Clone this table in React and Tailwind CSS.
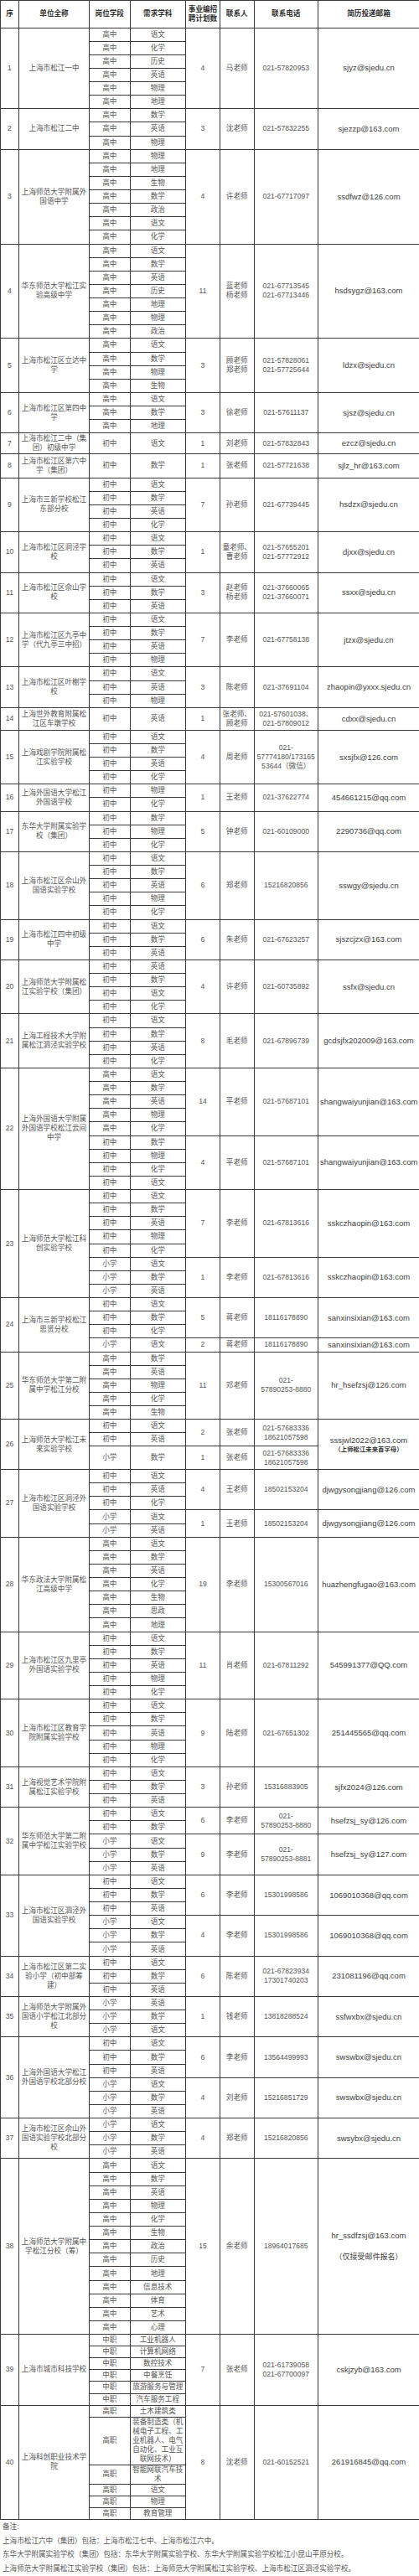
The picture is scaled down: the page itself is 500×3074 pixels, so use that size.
import React from 'react';

const D = 'h-[16.13px]';

const U = [
  { n: 1, name: '上海市松江一中', b: [{ s: '高中', j: ['语文', '化学', '历史', '英语', '物理', '地理'], c: '4', p: ['马老师'], t: ['021-57820953'], e: 'sjyz@sjedu.cn' }] },
  { n: 2, name: '上海市松江二中', b: [{ s: '高中', j: ['数学', '英语', '物理'], c: '3', p: ['沈老师'], t: ['021-57832255'], e: 'sjezzp@163.com' }] },
  { n: 3, name: '上海师范大学附属外国语中学', b: [{ s: '高中', j: ['物理', '地理', '生物', '数学', '政治', '语文', '化学'], c: '4', p: ['许老师'], t: ['021-67717097'], e: 'ssdfwz@126.com' }] },
  { n: 4, name: '华东师范大学松江实验高级中学', b: [{ s: '高中', j: ['语文', '数学', '英语', '历史', '地理', '物理', '政治'], c: '11', p: ['蓝老师', '杨老师'], t: ['021-67713545', '021-67713446'], e: 'hsdsygz@163.com' }] },
  { n: 5, name: '上海市松江区立达中学', b: [{ s: '高中', j: ['语文', '数学', '物理', '生物'], c: '3', p: ['顾老师', '郑老师'], t: ['021-57828061', '021-57725644'], e: 'ldzx@sjedu.cn' }] },
  { n: 6, name: '上海市松江区第四中学', b: [{ s: '高中', j: ['语文', '数学', '地理'], c: '3', p: ['徐老师'], t: ['021-57611137'], e: 'sjsz@sjedu.cn' }] },
  { n: 7, name: '上海市松江二中（集团）初级中学', b: [{ s: '初中', j: [['语文', 'h-[24.7px]']], c: '1', p: ['刘老师'], t: ['021-57832843'], e: 'ezcz@sjedu.cn' }] },
  { n: 8, name: '上海市松江区第六中学（集团）', b: [{ s: '初中', j: [['数学', 'h-[28.7px]']], c: '1', p: ['张老师'], t: ['021-57721638'], e: 'sjlz_hr@163.com' }] },
  { n: 9, name: '上海市三新学校松江东部分校', b: [{ s: '初中', j: ['语文', '数学', '英语', '化学'], c: '7', p: ['孙老师'], t: ['021-67739445'], e: 'hsdzx@sjedu.cn' }] },
  { n: 10, name: '上海市松江区洞泾学校', b: [{ s: '初中', j: ['语文', '数学', '英语'], c: '1', p: ['童老师、', '曹老师'], t: ['021-57655201', '021-57772912'], e: 'djxx@sjedu.cn' }] },
  { n: 11, name: '上海市松江区佘山学校', b: [{ s: '初中', j: ['语文', '数学', '英语'], c: '3', p: ['赵老师', '杨老师'], t: ['021-37660065', '021-37660071'], e: 'ssxx@sjedu.cn' }] },
  { n: 12, name: '上海市松江区九亭中学（代九亭三中招）', b: [{ s: '初中', j: ['语文', '数学', '英语', '物理'], c: '7', p: ['李老师'], t: ['021-67758138'], e: 'jtzx@sjedu.cn' }] },
  { n: 13, name: '上海市松江区叶榭学校', b: [{ s: '初中', j: ['语文', '英语', '物理'], c: '3', p: ['陈老师'], t: ['021-37691104'], e: 'zhaopin@yxxx.sjedu.cn' }] },
  { n: 14, name: '上海世外教育附属松江区车墩学校', b: [{ s: '初中', j: [['英语', 'h-[27px]']], c: '1', p: ['张老师、', '顾老师'], t: ['021-57601038、', '021-57809012'], e: 'cdxx@sjedu.cn' }] },
  { n: 15, name: '上海戏剧学院附属松江实验学校', b: [{ s: '初中', j: ['语文', '数学', '英语', '化学'], c: '4', p: ['周老师'], t: ['021-', '57774180/173165', '53644（微信）'], e: 'sxsjfx@126.com' }] },
  { n: 16, name: '上海外国语大学松江外国语学校', b: [{ s: '初中', j: ['物理', '化学'], c: '1', p: ['王老师'], t: ['021-37622774'], e: '454661215@qq.com' }] },
  { n: 17, name: '东华大学附属实验学校（集团）', b: [{ s: '初中', j: ['数学', '物理', '化学'], c: '5', p: ['钟老师'], t: ['021-60109000'], e: '2290736@qq.com' }] },
  { n: 18, name: '上海市松江区佘山外国语实验学校', b: [{ s: '初中', j: ['语文', '数学', '英语', '物理', '化学'], c: '6', p: ['郑老师'], t: ['15216820856'], e: 'sswgy@sjedu.cn' }] },
  { n: 19, name: '上海市松江四中初级中学', b: [{ s: '初中', j: ['语文', '数学', '英语'], c: '6', p: ['朱老师'], t: ['021-67623257'], e: 'sjszcjzx@163.com' }] },
  { n: 20, name: '上海师范大学附属松江实验学校（集团）', b: [{ s: '初中', j: ['英语', '数学', '语文', '化学'], c: '4', p: ['许老师'], t: ['021-60735892'], e: 'ssfx@sjedu.cn' }] },
  { n: 21, name: '上海工程技术大学附属松江泗泾实验学校', b: [{ s: '初中', j: ['语文', '数学', '英语', '化学'], c: '8', p: ['毛老师'], t: ['021-67896739'], e: 'gcdsjfx202009@163.com' }] },
  {
    n: 22, name: '上海外国语大学附属外国语学校松江云间中学', b: [
      { s: '高中', j: ['语文', '数学', '英语', '物理', '化学'], c: '14', p: ['平老师'], t: ['021-57687101'], e: 'shangwaiyunjian@163.com' },
      { s: '初中', j: ['数学', '物理', '化学', '语文'], c: '4', p: ['平老师'], t: ['021-57687101'], e: 'shangwaiyunjian@163.com' },
    ],
  },
  {
    n: 23, name: '上海师范大学松江科创实验学校', b: [
      { s: '初中', j: ['语文', '数学', '英语', '物理', '化学'], c: '7', p: ['李老师'], t: ['021-67813616'], e: 'sskczhaopin@163.com' },
      { s: '小学', j: ['语文', '数学', '英语'], c: '1', p: ['李老师'], t: ['021-67813616'], e: 'sskczhaopin@163.com' },
    ],
  },
  {
    n: 24, name: '上海市三新学校松江思贤分校', b: [
      { s: '初中', j: ['语文', '数学', '化学'], c: '5', p: ['蒋老师'], t: ['18116178890'], e: 'sanxinsixian@163.com' },
      { s: '小学', j: ['语文'], c: '2', p: ['蒋老师'], t: ['18116178890'], e: 'sanxinsixian@163.com' },
    ],
  },
  { n: 25, name: '华东师范大学第二附属中学松江分校', b: [{ s: '高中', j: ['数学', '英语', '物理', '化学', '生物'], c: '11', p: ['邓老师'], t: ['021-', '57890253-8880'], e: 'hr_hsefzsj@126.com' }] },
  {
    n: 26, name: '上海师范大学松江未来实验学校', merge: true, b: [
      { s: '初中', j: ['语文', '英语'], c: '2', p: ['张老师'], t: ['021-57683336', '18621057598'], e: 'sssjwl2022@163.com', note: '（上师松江未来首字母）', bold: true },
      { s: '小学', j: [['数学', 'h-[27.7px]']], c: '1', p: ['张老师'], t: ['021-57683336', '18621057598'] },
    ],
  },
  {
    n: 27, name: '上海市松江区洞泾外国语实验学校', b: [
      { s: '初中', j: ['语文', '英语', '化学'], c: '4', p: ['王老师'], t: ['18502153204'], e: 'djwgysongjiang@126.com' },
      { s: '小学', j: ['语文', '英语'], c: '1', p: ['王老师'], t: ['18502153204'], e: 'djwgysongjiang@126.com' },
    ],
  },
  { n: 28, name: '华东政法大学附属松江高级中学', b: [{ s: '高中', j: ['语文', '数学', '英语', '化学', '生物', '思政', '地理'], c: '19', p: ['李老师'], t: ['15300567016'], e: 'huazhengfugao@163.com' }] },
  { n: 29, name: '上海市松江区九里亭外国语实验学校', b: [{ s: '初中', j: ['语文', '数学', '英语', '物理', '化学'], c: '11', p: ['肖老师'], t: ['021-67811292'], e: '545991377@QQ.com' }] },
  { n: 30, name: '上海市松江区教育学院附属实验学校', b: [{ s: '初中', j: ['语文', '数学', '英语', '物理', '化学'], c: '9', p: ['陆老师'], t: ['021-67651302'], e: '251445565@qq.com' }] },
  { n: 31, name: '上海视觉艺术学院附属松江实验学校', b: [{ s: '初中', j: ['语文', '数学', '英语'], c: '3', p: ['孙老师'], t: ['15316883905'], e: 'sjfx2024@126.com' }] },
  {
    n: 32, name: '华东师范大学第二附属中学松江实验学校', b: [
      { s: '初中', j: ['语文', '数学'], c: '6', p: ['李老师'], t: ['021-', '57890253-8880'], e: 'hsefzsj_sy@126.com' },
      { s: '小学', j: ['语文', '数学', '英语'], c: '9', p: ['李老师'], t: ['021-', '57890253-8881'], e: 'hsefzsj_sy@127.com' },
    ],
  },
  {
    n: 33, name: '上海市松江区泗泾外国语实验学校', b: [
      { s: '初中', j: ['语文', '数学', '英语'], c: '6', p: ['李老师'], t: ['15301998586'], e: '1069010368@qq.com' },
      { s: '小学', j: ['语文', '数学', '英语'], c: '4', p: ['李老师'], t: ['15301998586'], e: '1069010368@qq.com' },
    ],
  },
  { n: 34, name: '上海市松江区第二实验小学（初中部筹建）', b: [{ s: '初中', j: ['语文', '数学', '英语'], c: '6', p: ['陈老师'], t: ['021-67823934', '17301740203'], e: '231081196@qq.com' }] },
  { n: 35, name: '上海师范大学附属外国语小学松江北部分校', b: [{ s: '小学', j: ['英语', '数学', '语文'], c: '1', p: ['钱老师'], t: ['13818288524'], e: 'ssfwxbx@sjedu.cn' }] },
  {
    n: 36, name: '上海外国语大学松江外国语学校北部分校', b: [
      { s: '初中', j: ['语文', '数学', '英语'], c: '6', p: ['李老师'], t: ['13564499993'], e: 'swswbx@sjedu.cn' },
      { s: '小学', j: ['语文', '数学', '英语'], c: '4', p: ['刘老师'], t: ['15216851729'], e: 'swswbx@sjedu.cn' },
    ],
  },
  { n: 37, name: '上海市松江区佘山外国语实验学校北部分校', b: [{ s: '小学', j: ['语文', '数学', '英语'], c: '4', p: ['郑老师'], t: ['15216820856'], e: 'swsybx@sjedu.cn' }] },
  { n: 38, name: '上海师范大学附属中学松江分校（筹）', b: [{ s: '高中', j: ['语文', '数学', '英语', '物理', '化学', '生物', '政治', '历史', '地理', '信息技术', '体育', '艺术', '心理'], c: '15', p: ['余老师'], t: ['18964017685'], e: 'hr_ssdfzsj@163.com', note: '（仅接受邮件报名）', gap: true }] },
  {
    n: 39, name: '上海市城市科技学校', b: [{
      s: '中职', j: [['工业机器人', 'h-[14.1px]'], ['计算机网络', 'h-[14.1px]'], ['数控技术', 'h-[14.1px]'], ['中餐烹饪', 'h-[14.1px]'], ['旅游服务与管理', 'h-[14.1px]'], ['汽车服务工程', 'h-[14.1px]']],
      c: '7', p: ['张老师'], t: ['021-61739058', '021-67700097'], e: 'cskjzyb@163.com',
    }],
  },
  {
    n: 40, name: '上海科创职业技术学院', b: [{
      s: '高职', j: [['土木建筑类', 'h-[14px]'], ['装备制造类（机械电子工程、工业机器人、电气自动化、工业互联网技术）', 'h-[57px]'], ['智能网联汽车技术', 'h-[23px]'], ['语文', 'h-[14.3px]'], ['物理', 'h-[14px]'], ['教育管理', 'h-[14px]']],
      c: '8', p: ['沈老师'], t: ['021-60152521'], e: '261916845@qq.com',
    }],
  },
];

const td = 'border border-[#3a3a3a] p-0 px-[2px] text-center align-middle';

function Lines({ items }) {
  return items.map((x, i) => (
    <div key={i} className="whitespace-nowrap">{x}</div>
  ));
}

function Email({ blk }) {
  return (
    <div className="text-[#3d3d3d]">
      <div className="font-['Liberation_Sans',sans-serif] text-[9.5px] leading-[12px] whitespace-nowrap">{blk.e}</div>
      {blk.note && (
        <div className={blk.bold ? 'text-[7.4px] leading-[10px] font-bold text-[#333]' : 'mt-[13px] text-[9px] leading-[12px]'}>
          {blk.note}
        </div>
      )}
    </div>
  );
}

export default function App() {
  const rows = [];
  U.forEach((u) => {
    const total = u.b.reduce((a, b) => a + b.j.length, 0);
    u.b.forEach((blk, bi) => {
      blk.j.forEach((sub, ji) => {
        const [subj, h] = Array.isArray(sub) ? sub : [sub, D];
        rows.push(
          <tr key={`${u.n}-${bi}-${ji}`} className={h}>
            {bi === 0 && ji === 0 && (
              <>
                <td rowSpan={total} className={td}>{u.n}</td>
                <td rowSpan={total} className={td}>{u.name}</td>
              </>
            )}
            <td className={td}>{blk.s}</td>
            <td className={td}>{subj}</td>
            {ji === 0 && (
              <>
                <td rowSpan={blk.j.length} className={td}>{blk.c}</td>
                <td rowSpan={blk.j.length} className={td}><Lines items={blk.p} /></td>
                <td rowSpan={blk.j.length} className={td}><Lines items={blk.t} /></td>
                {(!u.merge || bi === 0) && (
                  <td rowSpan={u.merge ? total : blk.j.length} className={td}><Email blk={blk} /></td>
                )}
              </>
            )}
          </tr>
        );
      });
    });
  });

  return (
    <div className="w-[500px] bg-white text-[#555] text-[8.6px] leading-[11px] font-['Liberation_Sans','Noto_Sans_CJK_SC',sans-serif]">
      <table className="w-[500px] table-fixed border-collapse">
        <colgroup>
          <col className="w-[22px]" />
          <col className="w-[84px]" />
          <col className="w-[48.5px]" />
          <col className="w-[66.5px]" />
          <col className="w-[41px]" />
          <col className="w-[40.5px]" />
          <col className="w-[76.5px]" />
          <col className="w-[121px]" />
        </colgroup>
        <thead>
          <tr className="h-[32.5px] font-bold text-[#2e2e2e]">
            <td className={td}>序</td>
            <td className={td}>单位全称</td>
            <td className={td}>岗位学段</td>
            <td className={td}>需求学科</td>
            <td className={`${td} leading-[10.7px]`}>事业编招聘计划数</td>
            <td className={td}>联系人</td>
            <td className={td}>联系电话</td>
            <td className={td}>简历投递邮箱</td>
          </tr>
        </thead>
        <tbody>{rows}</tbody>
      </table>
      <div className="px-[3px] leading-[16.7px]">
        <div>备注:</div>
        <div>上海市松江六中（集团）包括：上海市松江七中、上海市松江六中。</div>
        <div>东华大学附属实验学校（集团）包括：东华大学附属实验学校、东华大学附属实验学校松江小昆山平原分校。</div>
        <div>上海师范大学附属松江实验学校（集团）包括：上海师范大学附属松江实验学校、上海市松江区泗泾实验学校。</div>
      </div>
    </div>
  );
}
